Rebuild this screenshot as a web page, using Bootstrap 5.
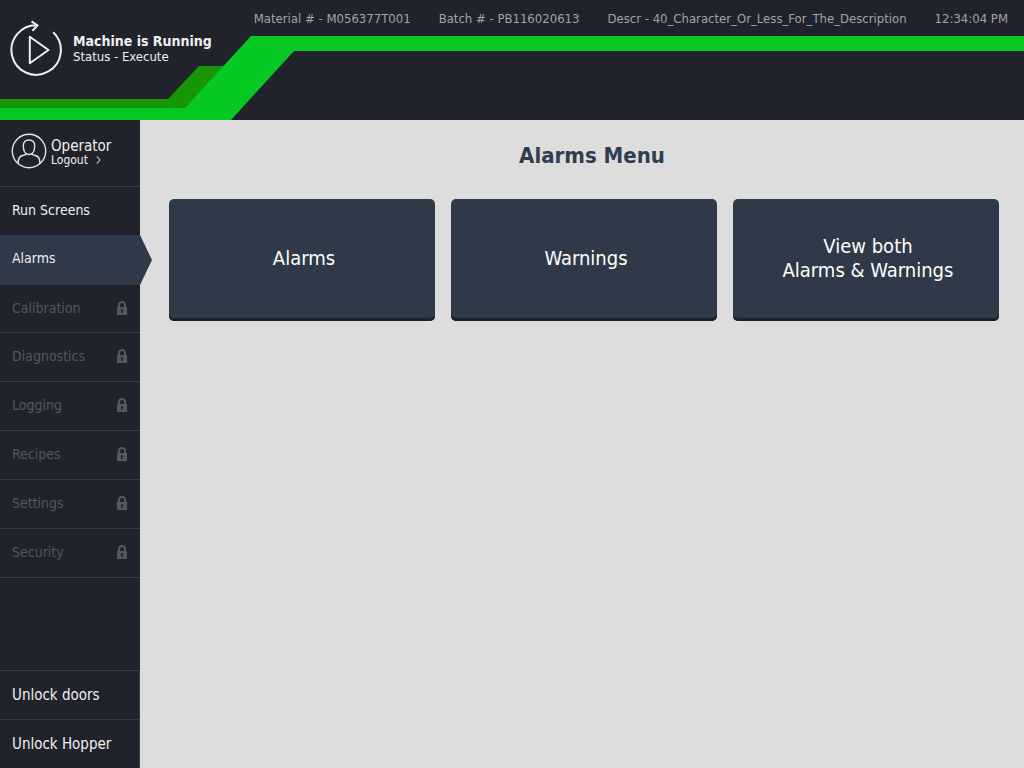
<!DOCTYPE html>
<html lang="en">
<head>
<meta charset="utf-8">
<meta name="viewport" content="width=device-width, initial-scale=1">
<title>Alarms Menu</title>
<link href="https://cdn.jsdelivr.net/npm/bootstrap@5.3.0/dist/css/bootstrap.min.css" rel="stylesheet">
<style>
  :root {
    --ink: #20222c;
    --slate: #2f3a48;
    --rule: #393b45;
    --dim: #56575f;
    --paper: #dddddd;
  }
  body {
    font-family: Tahoma, "DejaVu Sans Condensed", "DejaVu Sans", "Noto Sans", sans-serif;
    font-stretch: condensed;
    font-size: 14px;
    line-height: 16px;
    background: var(--paper);
    color: #f0f0f0;
  }
  .top-bar { background: var(--ink); height: 120px; }
  .band { z-index: 0; }
  .machine { padding: 20px 0 0 9px; gap: 10px; }
  .machine-text { padding-top: 2px; }
  .machine-name { font-size: 14px; font-weight: 700; }
  .machine-status { font-size: 13px; }
  .batch-info { padding: 11px 16px 0 0; gap: 28px; font-size: 13px; color: #a4a4a6; }
  .side { width: 140px; background: var(--ink); }
  .operator { height: 67px; padding: 0 0 4px 11px; gap: 4px; border-bottom: 1px solid var(--rule); }
  .operator-text { padding-top: 2px; }
  .operator-name { font-size: 15px; }
  .logout { font-size: 12px; line-height: 12px; color: #f0f0f0; text-decoration: none; }
  .side-item {
    height: 49px;
    padding: 0 13px 2px 12px;
    border: 0;
    border-bottom: 1px solid var(--rule);
    background: none;
    color: #f0f0f0;
    text-align: left;
  }
  .side-item:hover, .side-item:focus { color: #fff; }
  .side-item.disabled { color: var(--dim); }
  .side-item.current { height: 50px; background: var(--slate); border: 0; padding-bottom: 4px; }
  .side-item.current::after {
    content: "";
    position: absolute;
    left: 100%;
    top: 0;
    bottom: 0;
    width: 12px;
    background: var(--slate);
    clip-path: polygon(0 0, 100% 50%, 0 100%);
  }
  .side-item.before-current { height: 48px; border: 0; }
  .side-item.after-current { height: 48px; }
  .side-foot { border-top: 1px solid var(--rule); border-right: 1px solid var(--rule); }
  .side-foot .side-item { font-size: 15px; padding-bottom: 0; }
  .side-foot .side-item:last-child { height: 48px; border: 0; }
  .page-area { padding: 24px 25px 24px 29px; }
  .page-title { font-size: 22px; line-height: 24px; font-weight: 700; color: #2e3d51; margin: 0 0 31px; padding-left: 16px; }
  .tile {
    height: 122px;
    padding: 6px 10px 10px 14px;
    border: 0;
    border-radius: 5px;
    background: var(--slate);
    box-shadow: inset 0 -3px 0 #1e212c;
    color: #fff;
    font-size: 20px;
    line-height: 24px;
  }
  .tile:hover { background: #374455; color: #fff; }
</style>
</head>
<body class="d-flex flex-column min-vh-100">

<header class="top-bar position-relative">
  <svg class="band position-absolute top-0 start-0 w-100 h-100" aria-hidden="true">
    <polygon points="0,99 168,99 199,66 240,66 240,108 0,108" fill="#189706"/>
    <polygon points="0,108 185,108 251,36 6000,36 6000,51 294,51 231,120 0,120" fill="#06c923"/>
  </svg>
  <div class="position-relative d-flex justify-content-between align-items-start">
    <div class="machine d-flex align-items-center">
      <svg width="54" height="56" viewBox="0 0 54 56" fill="none" stroke="#f0f0f0" stroke-width="2" aria-hidden="true">
        <path d="M44.200 12.200A24.700 24.700 0 1 1 28.500 5.400"/>
        <path d="M22.500 1.300L28.500 5.400L23.500 10.800"/>
        <path d="M20.800 16.800L39.500 30L20.800 43.200Z" stroke-linejoin="round"/>
      </svg>
      <div class="machine-text">
        <div class="machine-name">Machine is Running</div>
        <div class="machine-status">Status - Execute</div>
      </div>
    </div>
    <div class="batch-info d-flex text-nowrap">
      <span>Material # - M056377T001</span>
      <span>Batch # - PB116020613</span>
      <span>Descr - 40_Character_Or_Less_For_The_Description</span>
      <time>12:34:04 PM</time>
    </div>
  </div>
</header>

<svg class="d-none" aria-hidden="true">
  <symbol id="lock" viewBox="0 0 10 14">
    <path d="M2 6V4a3 3 0 0 1 6 0v2" fill="none" stroke="currentColor" stroke-width="2"/>
    <path fill-rule="evenodd" fill="currentColor" d="M0 6H10V14H0ZM5 8A1.300 1.300 0 0 0 4.300 10.300V12H5.700V10.300A1.300 1.300 0 0 0 5 8Z"/>
  </symbol>
</svg>

<div class="d-flex flex-grow-1">
  <aside class="side d-flex flex-column flex-shrink-0">
    <div class="operator d-flex align-items-center">
      <svg width="36" height="36" viewBox="0 0 36 36" fill="none" stroke="#e4e4e4" stroke-width="1.400" aria-hidden="true">
        <circle cx="18" cy="18" r="16.700"/>
        <path d="M12.300 13C12.300 9 14.300 7 18 7S23.700 9 23.700 13C23.700 18 21.500 21.500 18 21.500S12.300 18 12.300 13Z"/>
        <path d="M7 30.500C7 25.500 8.500 22.800 12.500 22.300C14.500 22 15.200 21.500 15.200 20M29 30.500C29 25.500 27.500 22.800 23.500 22.300C21.500 22 20.800 21.500 20.800 20"/>
      </svg>
      <div class="operator-text d-flex flex-column">
        <span class="operator-name">Operator</span>
        <a href="#" class="logout d-flex align-items-center gap-2">Logout
          <svg width="5" height="8" viewBox="0 0 5 8" fill="none" stroke="#a0a0a4" stroke-width="1.300" aria-hidden="true"><path d="M.7.5L4.200 4L.7 7.500"/></svg>
        </a>
      </div>
    </div>

    <nav class="nav flex-column" aria-label="Main">
      <a href="#" class="side-item before-current nav-link d-flex align-items-center">Run Screens</a>
      <a href="#" class="side-item current nav-link position-relative d-flex align-items-center" aria-current="page">Alarms</a>
      <a href="#" class="side-item after-current nav-link disabled d-flex align-items-center justify-content-between" aria-disabled="true">Calibration <svg width="10" height="14"><use href="#lock"/></svg></a>
      <a href="#" class="side-item nav-link disabled d-flex align-items-center justify-content-between" aria-disabled="true">Diagnostics <svg width="10" height="14"><use href="#lock"/></svg></a>
      <a href="#" class="side-item nav-link disabled d-flex align-items-center justify-content-between" aria-disabled="true">Logging <svg width="10" height="14"><use href="#lock"/></svg></a>
      <a href="#" class="side-item nav-link disabled d-flex align-items-center justify-content-between" aria-disabled="true">Recipes <svg width="10" height="14"><use href="#lock"/></svg></a>
      <a href="#" class="side-item nav-link disabled d-flex align-items-center justify-content-between" aria-disabled="true">Settings <svg width="10" height="14"><use href="#lock"/></svg></a>
      <a href="#" class="side-item nav-link disabled d-flex align-items-center justify-content-between" aria-disabled="true">Security <svg width="10" height="14"><use href="#lock"/></svg></a>
    </nav>

    <div class="side-foot d-flex flex-column mt-auto">
      <button type="button" class="side-item">Unlock doors</button>
      <button type="button" class="side-item">Unlock Hopper</button>
    </div>
  </aside>

  <main class="page-area flex-grow-1">
    <h1 class="page-title text-center">Alarms Menu</h1>
    <div class="row row-cols-3 gx-3">
      <div class="col"><button type="button" class="tile btn w-100">Alarms</button></div>
      <div class="col"><button type="button" class="tile btn w-100">Warnings</button></div>
      <div class="col"><button type="button" class="tile btn w-100">View both<br>Alarms &amp; Warnings</button></div>
    </div>
  </main>
</div>

<script src="https://cdn.jsdelivr.net/npm/bootstrap@5.3.0/dist/js/bootstrap.bundle.min.js"></script>
</body>
</html>
